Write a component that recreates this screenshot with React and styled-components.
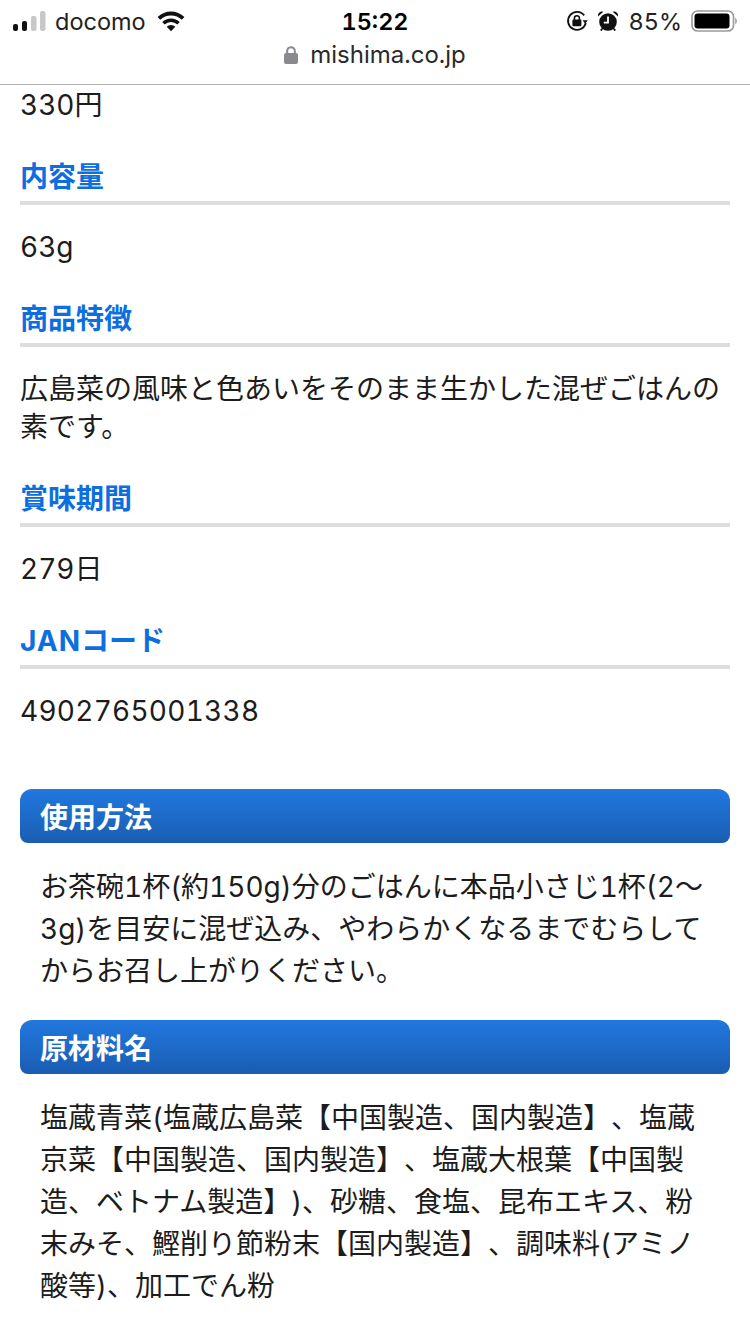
import styled, { createGlobalStyle } from "styled-components"

const GlobalStyle = createGlobalStyle`
    html, body {
        margin: 0;
        padding: 0;
        height: 1334px;
        overflow: hidden;
        background: #fff;
    }
`

const Page = styled.div`
    width: 750px;
    height: 1334px;
    overflow: hidden;
    color: #1c1c1c;
    font-family: Inter, "Noto Sans CJK JP", sans-serif;
    font-variant-numeric: tabular-nums;
    text-spacing-trim: space-all;
`

const Header = styled.header`
    display: flex;
    flex-direction: column;
    height: 84px;
    border-bottom: 1px solid #b2b2b2;
    background: #fff;
`

const StatusBar = styled.div`
    display: grid;
    grid-template-columns: 1fr auto 1fr;
    align-items: center;
    height: 42px;
    padding: 0 13px;
    color: #111;
`

const StatusSide = styled.div`
    display: flex;
    align-items: center;
    justify-content: ${(p) => (p.$end ? "flex-end" : "flex-start")};
    gap: 9px;
    font-size: 23.5px;
    color: #222;
`

const Clock = styled.div`
    font-size: 23.5px;
    font-weight: 600;
    color: #000;
`

const AddressBar = styled.div`
    display: flex;
    align-items: center;
    justify-content: center;
    gap: 12px;
    height: 25px;
    font-size: 24px;
    color: #2a2a2a;
`

const Content = styled.main`
    padding: 1px 20px 0;
`

const Value = styled.p`
    margin: 0 0 34px;
    font-size: 28px;
    line-height: 38px;
    color: #1c1c1c;
`

const Label = styled.h3`
    margin: 0 0 23px;
    padding-bottom: 5px;
    border-bottom: 4px solid #dddddd;
    font-size: 28px;
    line-height: 38px;
    font-weight: 700;
    color: #0d6ee0;
`

const LabelLatin = styled.span`
    letter-spacing: 1px;
`

const Code = styled(Value)`
    margin-bottom: 59px;
    letter-spacing: 0.25px;
`

const PanelTitle = styled.h2`
    margin: 0;
    height: 54px;
    padding-left: 20px;
    border-radius: 12px 12px 8px 8px;
    background: linear-gradient(#2178df, #1a5db2);
    font-size: 28px;
    line-height: 59px;
    font-weight: 700;
    color: #fff;
`

const PanelBody = styled.p`
    margin: 0 0 28px;
    padding: 23px 0 0 20px;
    font-size: 28px;
    line-height: 42px;
    white-space: nowrap;
    color: #1c1c1c;
`

const WifiIcon = styled.svg`
    margin-left: 2px;
`

const Signal = () => (
    <svg width="33" height="20" viewBox="0 0 33 20">
        <rect x="0" y="13" width="5" height="7" rx="2" fill="#111" />
        <rect x="9" y="10" width="5" height="10" rx="2" fill="#111" />
        <rect x="18" y="5" width="5.5" height="15" rx="2" fill="#c8c8c8" />
        <rect x="27" y="0" width="5.5" height="20" rx="2" fill="#c8c8c8" />
    </svg>
)

const Wifi = () => (
    <WifiIcon width="28" height="21" viewBox="0 0 30 22">
        <path d="M15 21.5 10.4 16.6a6.6 6.6 0 0 1 9.2 0Z" fill="#111" />
        <path d="M8.2 14.3 5.6 11.5a13.6 13.6 0 0 1 18.8 0l-2.6 2.8a9.8 9.8 0 0 0-13.6 0Z" fill="#111" />
        <path d="M3.4 9.2.6 6.2a20.8 20.8 0 0 1 28.8 0l-2.8 3a16.8 16.8 0 0 0-23.2 0Z" fill="#111" />
    </WifiIcon>
)

const Lock = () => (
    <svg width="14" height="18" viewBox="0 0 14 18">
        <path d="M3.2 8V5a3.8 3.8 0 0 1 7.6 0V8" fill="none" stroke="#8a8a8e" strokeWidth="2" />
        <rect x="0" y="7" width="14" height="11" rx="2" fill="#8a8a8e" />
    </svg>
)

const RotationLock = () => (
    <svg width="22" height="22" viewBox="0 0 22 22">
        <path d="M18.2 5.4A9 9 0 1 0 19.8 13" fill="none" stroke="#111" strokeWidth="1.8" />
        <path d="M16.6 10.2h5.2l-2.6 3.6Z" fill="#111" />
        <rect x="6.4" y="9.6" width="9" height="6.6" rx="1.2" fill="#111" />
        <path d="M8.4 10V8.2a2.5 2.5 0 0 1 5 0V10" fill="none" stroke="#111" strokeWidth="1.6" />
    </svg>
)

const Alarm = () => (
    <svg width="22" height="22" viewBox="0 0 22 22">
        <circle cx="11" cy="12" r="8.8" fill="#111" />
        <path d="M1 6.4a4 4 0 0 1 5.4-4.6ZM21 6.4a4 4 0 0 0-5.4-4.6Z" fill="#111" />
        <path d="M11 6.5V12.6H6.8" fill="none" stroke="#fff" strokeWidth="1.8" />
        <path d="M5 18.6 4 20.6M17 18.6 18 20.6" stroke="#111" strokeWidth="2" />
    </svg>
)

const Battery = () => (
    <svg width="46" height="22" viewBox="0 0 46 22">
        <rect x="1" y="1" width="41.5" height="20" rx="5.5" fill="none" stroke="#9a9a9a" strokeWidth="1.6" />
        <rect x="3.5" y="3.5" width="35" height="15" rx="3.2" fill="#000" />
        <path d="M44 7.5a4 4 0 0 1 0 7Z" fill="#b0b0b0" />
    </svg>
)

const App = () => {
    return (
        <Page>
            <GlobalStyle />
            <Header>
                <StatusBar>
                    <StatusSide>
                        <Signal />
                        docomo
                        <Wifi />
                    </StatusSide>
                    <Clock>15:22</Clock>
                    <StatusSide $end>
                        <RotationLock />
                        <Alarm />
                        85%
                        <Battery />
                    </StatusSide>
                </StatusBar>
                <AddressBar>
                    <Lock />
                    mishima.co.jp
                </AddressBar>
            </Header>
            <Content>
                <Value>330円</Value>
                <Label>内容量</Label>
                <Value>63g</Value>
                <Label>商品特徴</Label>
                <Value>
                    広島菜の風味と色あいをそのまま生かした混ぜごはんの
                    <br />
                    素です。
                </Value>
                <Label>賞味期間</Label>
                <Value>279日</Value>
                <Label><LabelLatin>JAN</LabelLatin>コード</Label>
                <Code>4902765001338</Code>
                <PanelTitle>使用方法</PanelTitle>
                <PanelBody>
                    お茶碗1杯(約150g)分のごはんに本品小さじ1杯(2〜
                    <br />
                    3g)を目安に混ぜ込み、やわらかくなるまでむらして
                    <br />
                    からお召し上がりください。
                </PanelBody>
                <PanelTitle>原材料名</PanelTitle>
                <PanelBody>
                    塩蔵青菜(塩蔵広島菜【中国製造、国内製造】、塩蔵
                    <br />
                    京菜【中国製造、国内製造】、塩蔵大根葉【中国製
                    <br />
                    造、ベトナム製造】)、砂糖、食塩、昆布エキス、粉
                    <br />
                    末みそ、鰹削り節粉末【国内製造】、調味料(アミノ
                    <br />
                    酸等)、加工でん粉
                </PanelBody>
            </Content>
        </Page>
    )
}

export default App
